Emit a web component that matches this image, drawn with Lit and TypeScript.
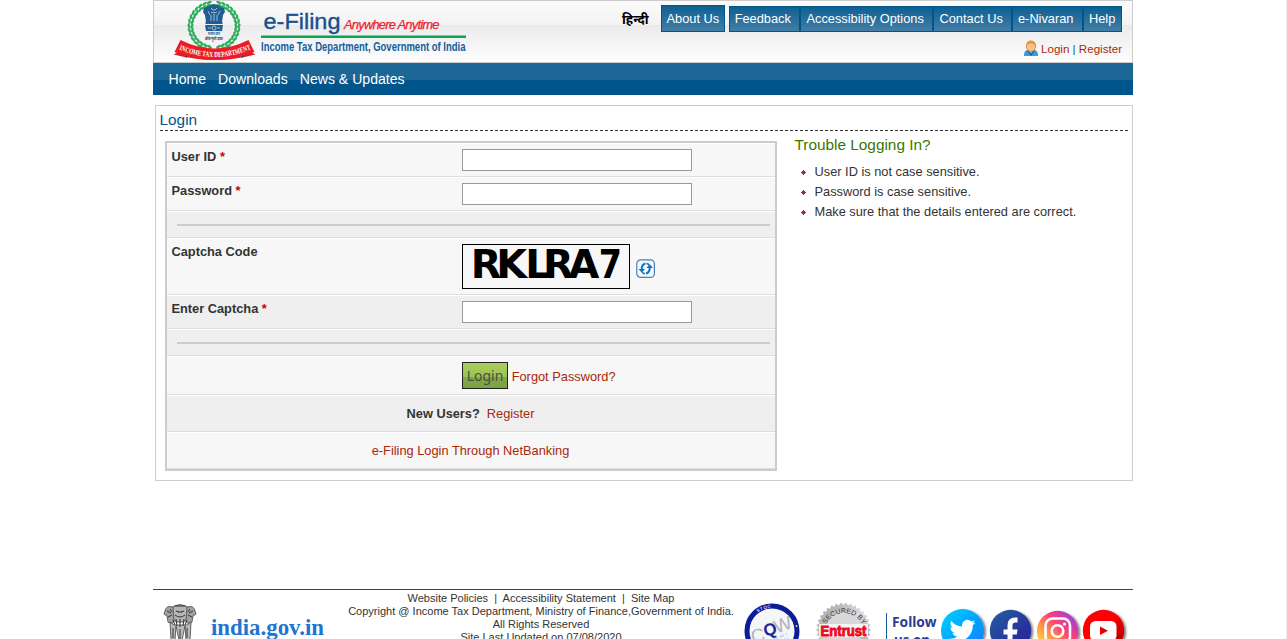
import { LitElement, html, css, svg } from "lit";
import { customElement } from "lit/decorators.js";

const leaves = (side: number) =>
  Array.from({ length: 15 }, (_, i) => {
    const a = ((-80 + i * 11.2) * Math.PI) / 180;
    const x = 60 + side * Math.cos(a) * 23.5;
    const y = 26 + Math.sin(a) * 22.5;
    const t = (Math.atan2(22.5 * Math.cos(a), -side * 23.5 * Math.sin(a)) * 180) / Math.PI;
    return svg`<g transform="translate(${x} ${y}) rotate(${t})">
      <ellipse cy="-1.6" rx="2.7" ry="1.3" transform="rotate(18)"/>
      <ellipse cy="1.6" rx="2.7" ry="1.3" transform="rotate(-18)"/></g>`;
  });

const teeth = (cx: number, cy: number, r1: number, r2: number, n: number) =>
  Array.from({ length: n * 2 }, (_, i) => {
    const a = (i * Math.PI) / n;
    const r = i % 2 ? r1 : r2;
    return `${(cx + Math.cos(a) * r).toFixed(1)},${(cy + Math.sin(a) * r).toFixed(1)}`;
  }).join(" ");

@customElement("site-logo")
class SiteLogo extends LitElement {
  static styles = css`
    :host { display: block; width: 330px; height: 61px; }
    svg { display: block; }
  `;
  render() {
    return html`<svg width="330" height="61" viewBox="0 1 330 61">
      <g fill="#2fae5c">${leaves(1)}${leaves(-1)}</g>
      <g fill="#1f5d92">
        <path d="M53 7q7-6 14 0l3 1 1 4-2 3-1 7H52l-1-7-2-3 1-4z"/>
        <path d="M51.500 22h17v2h-17zM51 25h18l-1 6H52z"/>
      </g>
      <g fill="none" stroke="#d9e8f2" stroke-width=".7">
        <path d="M57 8l2 2h2l2-2M57 12q3 2 6 0M54 11l2 4M66 11l-2 4M57 15v6M60 14v7M63 15v6M53 24.500h14"/>
        <circle cx="60" cy="28" r="2"/><path d="M54 28h3M63 28h3"/>
      </g>
      <g font-family="Noto Sans, sans-serif" text-anchor="middle" font-weight="700">
        <text x="60" y="35" font-size="4" fill="#1f5d92" textLength="12" lengthAdjust="spacingAndGlyphs">सत्यमेव जयते</text>
        <text x="60" y="39.500" font-size="4.500" fill="#333" textLength="18" lengthAdjust="spacingAndGlyphs">कोष मूलो दण्डः</text>
      </g>
      <path d="M19.500 54.500l8-4 6-4 4 4-5 7zM101.500 54.500l-8-4-6-4-4 4 5 7z" fill="#d81b24"/>
      <path d="M32 49l5 6-5 3zM89 49l-5 6 5 3z" fill="#17428c"/>
      <path d="M26.500 40q34 17 68 0l6 12q-40 16-80 0z" fill="#ec1c24"/>
      <path d="M34 54.500q27 6 54 0v3q-27 5-54 0z" fill="#ec1c24"/>
      <path id="arc" d="M25 49.500q35.500 15 71 0" fill="none"/>
      <text font-family="Liberation Serif, serif" font-weight="700" font-size="7.500" fill="#fff">
        <textPath href="#arc" textLength="74" lengthAdjust="spacingAndGlyphs">INCOME TAX DEPARTMENT</textPath></text>
      <g font-family="Liberation Sans, sans-serif">
        <text x="109.500" y="28.500" font-size="22.500" fill="#17508c" stroke="#17508c" stroke-width=".35" textLength="77" lengthAdjust="spacingAndGlyphs">e-Filing</text>
        <text x="190" y="28.500" font-size="13" font-style="italic" fill="#ed1c2e" stroke="#ed1c2e" stroke-width=".25" textLength="95.500">Anywhere Anytime</text>
        <text x="107" y="50.500" font-size="13.500" font-weight="700" fill="#12609b" textLength="204.500" lengthAdjust="spacingAndGlyphs">Income Tax Department, Government of India</text>
      </g>
      <path d="M107 35.500h205v2.400H107z" fill="#0aa551"/>
    </svg>`;
  }
}

@customElement("app-root")
class AppRoot extends LitElement {
  static styles = css`
    :host {
      display: block; box-sizing: border-box; width: 1287px; height: 639px; overflow: hidden;
      background: #fff; border-right: 1px solid #eee; color: #333;
      font: 12.8px/20px "Liberation Sans", Arial, sans-serif;
    }
    * { box-sizing: border-box; }
    .page { width: 980px; margin-left: 153px; }
    a { color: #a6290d; text-decoration: none; }
    svg { display: block; flex: none; }
    header {
      height: 63px; border: 1px solid #ccc; display: flex; justify-content: space-between;
      background: linear-gradient(#fbfbfb, #f3f3f3 24px, #ebebeb 24px, #fdfdfd);
    }
    .tools { display: flex; flex-direction: column; align-items: flex-end; padding: 4px 10px 0 0; }
    .bar { display: flex; align-items: flex-end; height: 27px; }
    .hindi { color: #000; font: 700 13px/26px "Noto Sans", "Noto Sans Devanagari", sans-serif; width: 27px; margin-right: 12px; white-space: nowrap; }
    .tab {
      height: 26px; padding-left: 5.5px; line-height: 24px; color: #fff; white-space: nowrap;
      border: 1px solid #00568c; background: linear-gradient(#0e6092, #427ea6);
    }
    .about { width: 64px; height: 27px; line-height: 26px; margin-right: 4px; padding-left: 4.5px; }
    .feedback, .nivaran { width: 71px; }
    .feedback { padding-left: 4.7px; }
    .access { width: 133px; }
    .contact { width: 79px; }
    .help { width: 39px; }
    .nivaran, .help { padding-left: 5px; }
    .account { display: flex; align-items: center; gap: 3px; margin-top: 8px; height: 18px; font-size: 11.6px; color: #00568c; }
    nav {
      height: 32px; padding: 0 15.5px; display: flex; gap: 12px; line-height: 32px; font-size: 14.08px;
      background: linear-gradient(#1c6796 17px, #00568c 17px);
    }
    nav a { color: #fff; }
    main { height: 376px; margin: 10px 0 0 2px; border: 1px solid #ccc; padding: 3px 4px 0; }
    h1 { margin: 0; height: 22px; font-size: 15.36px; line-height: 22px; font-weight: 400; color: #00568c; border-bottom: 1px dashed #333; text-indent: -.5px; }
    .columns { display: flex; }
    .form { width: 612px; height: 330px; margin: 10px 0 0 5px; border: 2px solid #ccc; }
    .row { display: flex; background: #f7f7f7; border-top: 1px solid #fff; border-bottom: 1px solid #ddd; padding-left: 5px; }
    .dark { background: #efefef; }
    .field { height: 34px; }
    .captcha { height: 57px; }
    .sep { height: 27px; padding: 12px 5px 0 10px; }
    .line { flex: 1; height: 2px; background: #ccc; }
    .label { width: 290px; font-weight: 700; padding-top: 3px; text-indent: -.5px; }
    .req { color: #c00; }
    input { width: 230px; height: 22px; margin: 5px 0 0; border: 1px solid #999; background: #fff; padding: 1px 4px; }
    .code { width: 168px; height: 45px; border: 1px solid #000; margin-top: 5px; overflow: visible; }
    .refresh { margin: 20px 0 0 6px; }
    .submit { height: 39px; }
    button {
      width: 46px; height: 27px; margin: 5px 3.7px 0 290px; padding: 0; border: 1px solid #222;
      background: linear-gradient(#a9ce60, #9dc250 14px, #80a948 14px, #7aa240);
      color: #4a4f45; font: 14px/24px "Noto Sans", sans-serif;
    }
    .forgot { padding-top: 10px; }
    .center { height: 37px; justify-content: center; align-items: center; gap: 7px; padding: 0 1px 0 0; }
    .trouble { margin-left: 17.5px; }
    h2 { margin: 4px 0 7px; font-size: 15.36px; line-height: 20px; font-weight: 400; color: #397700; }
    ul { list-style: none; margin: 0; padding: 0; }
    li { display: flex; align-items: center; gap: 8.5px; padding-left: 6.5px; height: 20px; }
    footer { margin-top: 108px; height: 90px; border-top: 1px solid #00568c; display: flex; align-items: flex-start; }
    .legal { width: 390px; padding-top: 2px; text-align: center; font-size: 11.03px; line-height: 13px; white-space: pre; }
  `;

  render() {
    return html`<div class="page">
      <header>
        <site-logo></site-logo>
        <div class="tools">
          <div class="bar">
            <span class="hindi">हिन्दी</span>
            <a class="tab about">About Us</a><a class="tab feedback">Feedback</a><a class="tab access">Accessibility Options</a><a class="tab contact">Contact Us</a><a class="tab nivaran">e-Nivaran</a><a class="tab help">Help</a>
          </div>
          <div class="account">
            <svg width="14" height="18" viewBox="0 0 14 18">
              <path d="M0 16q-.2-5 3-6h8q3.200 1 3 6z" fill="#3b9be0"/>
              <path d="M3 10.500l4 5.500 4-5.500z" fill="#1d64b0"/><path d="M5 9.500l2 4 2-4z" fill="#f7d9a8"/>
              <ellipse cx="7" cy="6.200" rx="4.700" ry="5.200" fill="#f9c184" stroke="#d98a35" stroke-width=".9"/>
              <path d="M2.500 5q0-4.500 4.500-4.300T11.500 5Q7 2 2.500 5" fill="#e8943a"/>
            </svg>
            <span><a>Login</a> | <a>Register</a></span>
          </div>
        </div>
      </header>
      <nav><a>Home</a><a>Downloads</a><a>News &amp; Updates</a></nav>
      <main>
        <h1>Login</h1>
        <div class="columns">
          <div class="form">
            <div class="row field"><span class="label">User ID <span class="req">*</span></span><input></div>
            <div class="row field"><span class="label">Password <span class="req">*</span></span><input type="password"></div>
            <div class="row sep dark"><div class="line"></div></div>
            <div class="row captcha"><span class="label">Captcha Code</span>
              <svg class="code" viewBox="0 0 166 43">
                <g font-family="DejaVu Sans" font-weight="700" font-size="39.800" fill="#000">
                  <text x="7.800 33.200 62.200 80 105.500" y="33">RKLRA</text>
                  <text transform="translate(135.800 33) scale(.84 1)">7</text>
                </g>
              </svg>
              <svg class="refresh" width="20" height="20" viewBox="0 0 20 20">
                <rect x=".8" y=".8" width="17.600" height="17.600" rx="4" fill="#f4f9fd" stroke="#4a7fb0" stroke-width="1.200"/>
                <g fill="none" stroke="#1274c4" stroke-width="2"><path d="M5.800 10.500q-.3-5 3.700-6"/><path d="M13.700 8.500q.3 5-3.700 6"/>
                <path d="M10.500 4.500q1.800.2 2.700 1.500M9 14.700q-1.800-.2-2.700-1.500" stroke-width="1.500"/></g>
                <path d="M2.500 10h6.600l-3.300 3.800zM17 9h-6.600l3.300-3.800z" fill="#1274c4"/>
              </svg>
            </div>
            <div class="row field dark"><span class="label">Enter Captcha <span class="req">*</span></span><input></div>
            <div class="row sep dark"><div class="line"></div></div>
            <div class="row submit"><button>Login</button><a class="forgot">Forgot Password?</a></div>
            <div class="row center dark"><b>New Users?</b><a>Register</a></div>
            <div class="row center"><a>e-Filing Login Through NetBanking</a></div>
          </div>
          <div class="trouble">
            <h2>Trouble Logging In?</h2>
            <ul>${["User ID is not case sensitive.", "Password is case sensitive.", "Make sure that the details entered are correct."].map(
              (t) => html`<li><svg width="5" height="5" viewBox="0 0 5 5"><path d="M2 0h1v1h1v1h1v1H4v1H3v1H2V4H1V3H0V2h1V1h1z" fill="#a02a3c"/></svg>${t}</li>`
            )}</ul>
          </div>
        </div>
      </main>
      <footer>
        <svg width="193" height="60" viewBox="153 590 193 60">
          <g fill="#777" stroke="#444" stroke-width=".8">
            <path d="M174 606q6-3 12 0l3 4-1 8-4 4h-8l-4-4-1-8z" fill="#b5b5b5"/>
            <path d="M173 607q-7-2-8 4l-1 3 3 2 1 6q5 3 6-1zM187 607q7-2 8 4l1 3-3 2-1 6q-5 3-6-1z" fill="#a2a2a2"/>
            <path d="M170 622l1 18h4l1-14 3 14h3l3-14 1 14h4l1-18-4 3h-13z" fill="#bbb"/>
          </g>
          <path d="M175 606h10M176 611l3 1M184 611l-3 1M175 615q5 4 10 0M178 612h4M167 611l4 2M193 611l-4 2M168 617l4-2M192 617l-4-2M173 620l2 5M176 619l1 7M180 619v8M184 619l-1 7M187 620l-2 5M173 628v10M187 628v10M180 629v10M170 609l2 3M190 609l-2 3" fill="none" stroke="#333" stroke-width="1"/>
          <text x="211" y="635" font-family="Liberation Serif, serif" font-weight="700" font-size="24" fill="#1f74d1" textLength="113" lengthAdjust="spacingAndGlyphs">india.gov.in</text>
        </svg>
        <div class="legal">Website Policies&nbsp; |&nbsp; Accessibility Statement&nbsp; |&nbsp; Site Map
Copyright @ Income Tax Department, Ministry of Finance,Government of India.
All Rights Reserved
Site Last Updated on 07/08/2020</div>
        <svg width="397" height="60" viewBox="736 590 397 60">
          <defs>
            <linearGradient id="tw" x2="1" y2="1"><stop stop-color="#00d2ff"/><stop offset="1" stop-color="#0a78ff"/></linearGradient>
            <linearGradient id="fb" x2="1" y2="1"><stop stop-color="#2460a0"/><stop offset="1" stop-color="#2a1a98"/></linearGradient>
            <linearGradient id="ig" x1="0" y1="1" x2="1" y2="0"><stop offset=".15" stop-color="#ffd24a"/><stop offset=".35" stop-color="#ff9a45"/><stop offset=".6" stop-color="#ff3f78"/><stop offset=".9" stop-color="#9d3ce0"/></linearGradient>
            <linearGradient id="yt" x2="1" y2="1"><stop offset=".5" stop-color="#f00"/><stop offset="1" stop-color="#8c0000"/></linearGradient>
            <linearGradient id="sv" x2="1" y2="1"><stop stop-color="#999"/><stop offset=".5" stop-color="#ddd"/><stop offset="1" stop-color="#999"/></linearGradient>
            <filter id="sh" x="-20%" y="-20%" width="150%" height="150%"><feDropShadow dx="2" dy="1" stdDeviation="1.200" flood-opacity=".5"/></filter>
            <path id="stqc" d="M748.700 631a23.300 23.300 0 0 1 46.600 0"/>
            <path id="sec" d="M824 633a20 20 0 0 1 40 0"/>
          </defs>
          <circle cx="772" cy="631" r="25" fill="#f5f6f8" stroke="#0b1d96" stroke-width="5"/>
          <g font-family="Liberation Sans, sans-serif" font-weight="700">
            <text font-size="4.500" fill="#c8cdf0"><textPath href="#stqc" startOffset="21" textLength="14">STQC</textPath></text>
            <circle cx="796.500" cy="626" r="1" fill="#fd0"/>
            <g font-size="19" font-weight="400"><text x="751" y="642" fill="#aeb3bc" transform="rotate(-16 758 636)">C</text><text x="763" y="635" fill="#15299a" font-weight="700" transform="rotate(-12 771 628)" font-size="17">Q</text><text x="774" y="632" fill="#aeb3bc" transform="rotate(-20 780 626)">W</text></g>
            <path d="M760 645l27-11M768 646l20-8" stroke="#c9d6e8" stroke-width="2" stroke-dasharray="5 2"/>
            <polygon points="${teeth(843.5, 630, 25, 27.5, 34)}" fill="url(#sv)"/>
            <circle cx="843.500" cy="630" r="18.500" fill="#d8d8d8"/>
            <text font-size="7" font-weight="400" fill="#333"><textPath href="#sec" startOffset="9" textLength="45" lengthAdjust="spacingAndGlyphs">SECURED BY</textPath></text>
            <path d="M819 624h49v13h-49z" fill="#fff" opacity=".75"/>
            <text x="820.500" y="635.500" font-size="14" fill="#f00a1c" stroke="#f00a1c" stroke-width=".9" textLength="46" lengthAdjust="spacingAndGlyphs">Entrust</text>
          </g>
          <path d="M886.500 613v37" stroke="#1a5f93"/>
          <g font-family="Noto Sans, sans-serif" font-weight="700" font-size="14.500" fill="#2d3c91">
            <text x="892" y="627" textLength="44.500" lengthAdjust="spacingAndGlyphs">Follow</text>
            <text x="894" y="644.500" textLength="36" lengthAdjust="spacingAndGlyphs">us on</text>
          </g>
          <g filter="url(#sh)">
            <circle cx="962.500" cy="630.500" r="21.500" fill="url(#tw)"/><circle cx="1010.500" cy="630.500" r="20.700" fill="url(#fb)"/>
            <circle cx="1057.500" cy="631.500" r="20.700" fill="url(#ig)"/><circle cx="1103.500" cy="630.500" r="20.700" fill="url(#yt)"/>
          </g>
          <g fill="#fff">
            <path transform="translate(949.500 617.500) scale(1.080)" d="M23.953 4.570a10 10 0 0 1-2.825.775 4.958 4.958 0 0 0 2.163-2.723c-.951.555-2.005.959-3.127 1.184a4.920 4.920 0 0 0-8.384 4.482C7.690 8.095 4.067 6.130 1.640 3.162a4.822 4.822 0 0 0-.666 2.475c0 1.710.87 3.213 2.188 4.096a4.904 4.904 0 0 1-2.228-.616v.06a4.923 4.923 0 0 0 3.946 4.827 4.996 4.996 0 0 1-2.212.085 4.936 4.936 0 0 0 4.604 3.417 9.867 9.867 0 0 1-6.102 2.105c-.39 0-.779-.023-1.170-.067a13.995 13.995 0 0 0 7.557 2.209c9.053 0 13.998-7.496 13.998-13.985 0-.21 0-.42-.015-.63A9.935 9.935 0 0 0 24 4.590z"/>
            <path d="M1007.500 650v-15.500h-4v-5h4v-4q0-8 8-8h2v5h-2q-3 0-3 3v4h5l-.7 5h-4.300V650z"/>
            <rect x="1090" y="621" width="26.500" height="20" rx="5.500"/>
          </g>
          <g fill="none" stroke="#fff" stroke-width="2.600"><rect x="1045.500" y="618.500" width="24.500" height="25" rx="7"/><circle cx="1057.500" cy="631" r="5.800"/></g>
          <circle cx="1064.500" cy="624" r="1.600" fill="#fff"/>
          <path d="M1100 626.500l8 4.200-8 4.200z" fill="#e50000"/>
        </svg>
      </footer>
    </div>`;
  }
}
